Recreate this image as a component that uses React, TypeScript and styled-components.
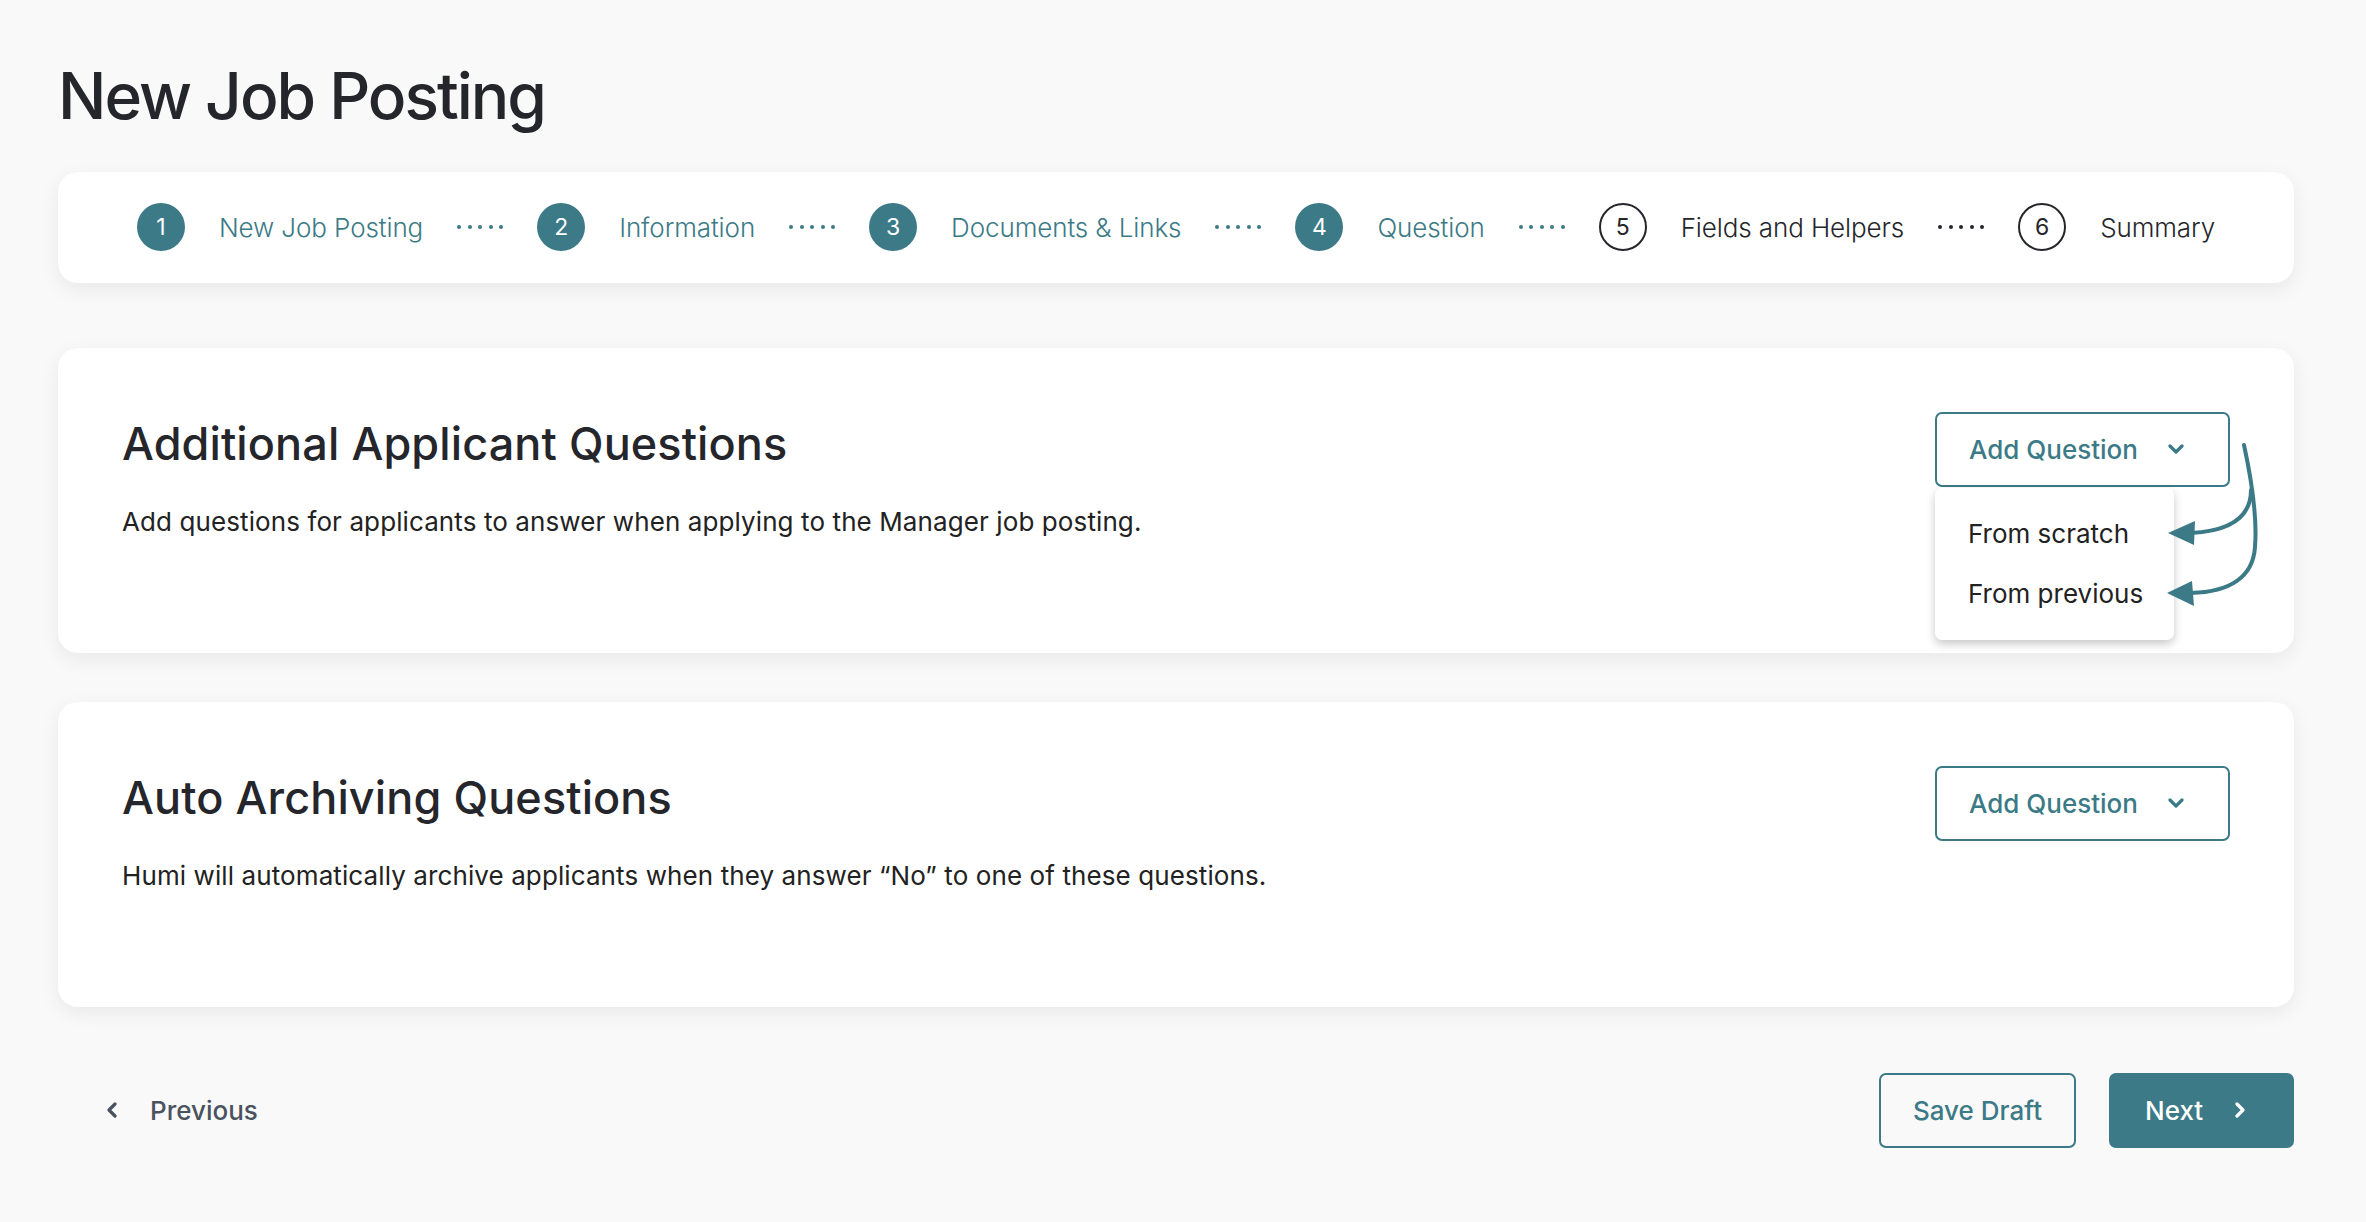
import styled, { createGlobalStyle } from "styled-components";

const TEAL = "#3b7a86";
const INK = "#25262b";

const GlobalStyle = createGlobalStyle`
    * {
        box-sizing: border-box;
    }
    body {
        margin: 0;
        background: #f9f9f9;
        font-family: Inter, "Noto Sans", "Liberation Sans", sans-serif;
        color: ${INK};
    }
`;

const StyledPage = styled.main`
    padding: 58px 72px 75px 58px;
`;

const StyledPageTitle = styled.h1`
    margin: 0;
    font-size: 64px;
    line-height: 1.2;
    font-weight: 500;
    letter-spacing: -2px;
    color: ${INK};
`;

const StyledStepper = styled.nav`
    display: flex;
    align-items: center;
    justify-content: center;
    gap: 34px;
    height: 111px;
    margin-top: 37px;
    background: #fff;
    border-radius: 20px;
    box-shadow: 0 6px 20px rgba(0, 0, 0, 0.07);
`;

const StyledStepCircle = styled.span<{ $done: boolean }>`
    display: flex;
    align-items: center;
    justify-content: center;
    width: 48px;
    height: 48px;
    border-radius: 50%;
    font-size: 23px;
    font-weight: 400;
    background: ${({ $done }) => ($done ? TEAL : "#fff")};
    color: ${({ $done }) => ($done ? "#fff" : INK)};
    border: ${({ $done }) => ($done ? "none" : `2px solid ${INK}`)};
`;

const StyledStepLabel = styled.span<{ $done: boolean }>`
    font-size: 26px;
    font-weight: 300;
    letter-spacing: -0.1px;
    color: ${({ $done }) => ($done ? TEAL : INK)};
`;

const StyledDots = styled.span<{ $done: boolean }>`
    display: flex;
    gap: 6.5px;
    & > i {
        width: 4px;
        height: 4px;
        border-radius: 50%;
        background: ${({ $done }) => ($done ? TEAL : INK)};
    }
`;

const StyledCard = styled.section<{ $gap: number }>`
    display: flex;
    justify-content: space-between;
    align-items: flex-start;
    min-height: 305px;
    margin-top: ${({ $gap }) => $gap}px;
    padding: 64px;
    background: #fff;
    border-radius: 20px;
    box-shadow: 0 6px 20px rgba(0, 0, 0, 0.07);
`;

const StyledCardTitle = styled.h2`
    margin: 5px 0 0;
    font-size: 45px;
    line-height: 53px;
    font-weight: 500;
    letter-spacing: 0.1px;
    color: ${INK};
`;

const StyledCardText = styled.p`
    margin: 34px 0 0;
    font-size: 26px;
    line-height: 36px;
    font-weight: 400;
    letter-spacing: 0.1px;
    color: #222;
`;

const StyledMenuAnchor = styled.div`
    position: relative;
`;

const StyledOutlineButton = styled.button<{ $width?: number }>`
    display: flex;
    align-items: center;
    width: ${({ $width }) => ($width ? `${$width}px` : "auto")};
    height: 75px;
    padding: 0 32px;
    background: transparent;
    border: 2px solid ${TEAL};
    border-radius: 7px;
    font-family: inherit;
    font-size: 26px;
    font-weight: 500;
    white-space: nowrap;
    color: ${TEAL};
    cursor: pointer;
    gap: 30px;
`;

const StyledMenu = styled.ul`
    position: absolute;
    top: 76px;
    left: 0;
    width: 239px;
    margin: 0;
    padding: 16px 0;
    list-style: none;
    background: #fff;
    border-radius: 7px;
    box-shadow: 0 4px 10px rgba(0, 0, 0, 0.22);
    z-index: 2;
`;

const StyledMenuItem = styled.li`
    padding-left: 33px;
    font-size: 26px;
    line-height: 60px;
    color: #222;
`;

const StyledAnnotation = styled.svg`
    position: absolute;
    left: 220px;
    top: 20px;
    overflow: visible;
    z-index: 3;
`;

const StyledFooter = styled.footer`
    display: flex;
    align-items: center;
    justify-content: space-between;
    margin-top: 66px;
`;

const StyledGhostButton = styled.button`
    display: flex;
    align-items: center;
    gap: 33px;
    height: 75px;
    padding: 0 0 0 49px;
    background: none;
    border: none;
    font-family: inherit;
    font-size: 26px;
    font-weight: 500;
    color: #4a5260;
    cursor: pointer;
`;

const StyledActions = styled.div`
    display: flex;
    gap: 33px;
`;

const StyledPrimaryButton = styled.button`
    display: flex;
    align-items: center;
    gap: 32px;
    width: 185px;
    height: 75px;
    padding: 0 0 0 36px;
    background: ${TEAL};
    border: none;
    border-radius: 7px;
    font-family: inherit;
    font-size: 26px;
    font-weight: 500;
    color: #fff;
    cursor: pointer;
`;

const steps = [
    { label: "New Job Posting", done: true },
    { label: "Information", done: true },
    { label: "Documents & Links", done: true },
    { label: "Question", done: true },
    { label: "Fields and Helpers", done: false },
    { label: "Summary", done: false },
];

function Chevron({ dir, color }: { dir: "down" | "left" | "right"; color: string }) {
    const points = dir === "down" ? "2,2 8,8 14,2" : dir === "left" ? "8,2 2,8 8,14" : "2,2 8,8 2,14";
    const w = dir === "down" ? 16 : 10;
    const h = dir === "down" ? 10 : 16;
    return (
        <svg width={w} height={h} viewBox={`0 0 ${w} ${h}`} fill="none">
            <polyline points={points} stroke={color} strokeWidth="3.2" strokeLinecap="round" strokeLinejoin="round" />
        </svg>
    );
}

function Dots({ done }: { done: boolean }) {
    return (
        <StyledDots $done={done}>
            <i />
            <i />
            <i />
            <i />
            <i />
        </StyledDots>
    );
}

function Stepper() {
    return (
        <StyledStepper>
            {steps.map((step, i) => [
                <StyledStepCircle key={`c${i}`} $done={step.done}>
                    {i + 1}
                </StyledStepCircle>,
                <StyledStepLabel key={`l${i}`} $done={step.done}>
                    {step.label}
                </StyledStepLabel>,
                i < steps.length - 1 ? <Dots key={`d${i}`} done={i < 4} /> : null,
            ])}
        </StyledStepper>
    );
}

function Annotation() {
    return (
        <StyledAnnotation width="110" height="200" viewBox="0 0 110 200">
            <path d="M89 13 C97 50, 102 90, 100 115 C98 145, 75 160, 36 161" stroke={TEAL} strokeWidth="4" fill="none" strokeLinecap="round" />
            <path d="M96 58 C96 85, 76 99, 36 101" stroke={TEAL} strokeWidth="4" fill="none" strokeLinecap="round" />
            <polygon points="13,101 40,89 39,113" fill={TEAL} />
            <polygon points="12,161 37,149 39,174" fill={TEAL} />
        </StyledAnnotation>
    );
}

function AddQuestion({ open }: { open?: boolean }) {
    return (
        <StyledMenuAnchor>
            <StyledOutlineButton $width={295}>
                Add Question
                <Chevron dir="down" color={TEAL} />
            </StyledOutlineButton>
            {open && (
                <>
                    <StyledMenu>
                        <StyledMenuItem>From scratch</StyledMenuItem>
                        <StyledMenuItem>From previous</StyledMenuItem>
                    </StyledMenu>
                    <Annotation />
                </>
            )}
        </StyledMenuAnchor>
    );
}

export default function App() {
    return (
        <>
            <GlobalStyle />
            <StyledPage>
                <StyledPageTitle>New Job Posting</StyledPageTitle>
                <Stepper />
                <StyledCard $gap={65}>
                    <div>
                        <StyledCardTitle>Additional Applicant Questions</StyledCardTitle>
                        <StyledCardText>Add questions for applicants to answer when applying to the Manager job posting.</StyledCardText>
                    </div>
                    <AddQuestion open />
                </StyledCard>
                <StyledCard $gap={49}>
                    <div>
                        <StyledCardTitle>Auto Archiving Questions</StyledCardTitle>
                        <StyledCardText>Humi will automatically archive applicants when they answer “No” to one of these questions.</StyledCardText>
                    </div>
                    <AddQuestion />
                </StyledCard>
                <StyledFooter>
                    <StyledGhostButton>
                        <Chevron dir="left" color="#4a5260" />
                        Previous
                    </StyledGhostButton>
                    <StyledActions>
                        <StyledOutlineButton>Save Draft</StyledOutlineButton>
                        <StyledPrimaryButton>
                            Next
                            <Chevron dir="right" color="#fff" />
                        </StyledPrimaryButton>
                    </StyledActions>
                </StyledFooter>
            </StyledPage>
        </>
    );
}
